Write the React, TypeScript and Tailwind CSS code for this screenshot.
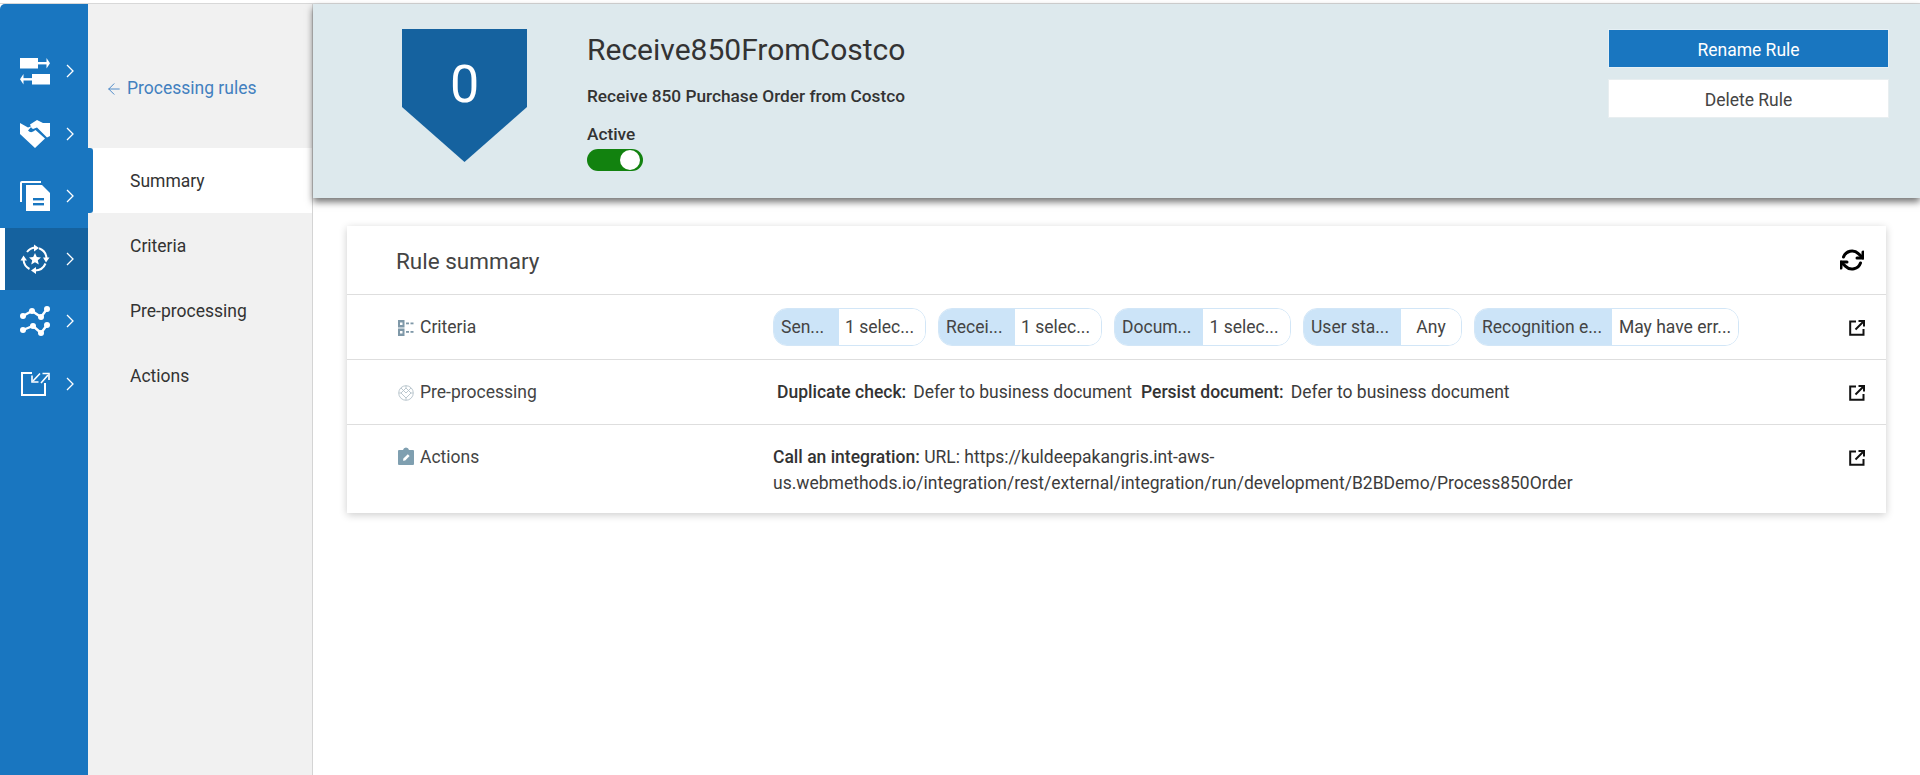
import { ArrowLeft } from "lucide-react";
import { FiRefreshCw } from "react-icons/fi";

const TransferIcon = () => (
  <svg width="30" height="30" viewBox="0 0 30 30" fill="#fff">
    <rect x="0" y="2" width="18" height="10.5" />
    <rect x="18" y="6" width="10" height="2.4" />
    <path d="M26.5 2 L30 7.2 L26.5 12.5Z" />
    <rect x="12" y="18" width="18" height="10.5" />
    <rect x="2" y="22.1" width="10" height="2.4" />
    <path d="M3.5 18 L0 23.3 L3.5 28.5Z" />
  </svg>
);

const HandshakeIcon = () => (
  <svg width="30" height="28" viewBox="0 0 30 28" fill="#fff">
    <path d="M0 3 L8 7.5 L12 6 L8 10.5 Q11 14 15.5 10 L25 18.5 L15 28 L0 14Z" />
    <path d="M10 4.5 L17 0 L23 3 L30 3 V16 L27 17.5 L17 7.5 L13 9 L11.5 8Z" />
  </svg>
);

const DocsIcon = () => (
  <svg width="30" height="30" viewBox="0 0 30 30">
    <path d="M21 1 H2 Q1 1 1 2 V21" fill="none" stroke="#fff" strokeWidth="2" />
    <path d="M6 4 H22 L30 12 V30 H6Z" fill="#fff" />
    <rect x="13" y="17" width="11" height="2.4" fill="#1976c0" />
    <rect x="13" y="22" width="11" height="2.4" fill="#1976c0" />
  </svg>
);

const RulesIcon = () => (
  <svg width="30" height="30" viewBox="0 0 30 30" fill="none" stroke="#fff" strokeWidth="2">
    <path d="M7 8 A11.5 11.5 0 0 1 15 3.5" />
    <path d="M19 4.3 A11.5 11.5 0 0 1 26.5 14" />
    <path d="M25.5 19.5 A11.5 11.5 0 0 1 15 26.5" />
    <path d="M9.5 25 A11.5 11.5 0 0 1 3.5 15.5" />
    <path d="M14 0.5 L19 4 L14 7.5Z M29.5 13.5 L26 18.5 L23 13.5Z M16 23 L11 26.5 L16 30Z M0.5 16.5 L3.5 11.5 L7 16.5Z" fill="#fff" stroke="none" />
    <path d="M15 9 L16.8 13 L21 13.4 L17.8 16.2 L18.8 20.4 L15 18.2 L11.2 20.4 L12.2 16.2 L9 13.4 L13.2 13 Z" fill="#fff" stroke="none" />
  </svg>
);

const TrendIcon = () => (
  <svg width="30" height="32" viewBox="0 0 30 32" fill="#fff" stroke="#fff" strokeWidth="2.4">
    <polyline points="3,11 12,6 21,12 27,4" fill="none" />
    <polyline points="3,25 13,21 21,28 27,20" fill="none" />
    {[[3, 11], [12, 6], [21, 12], [27, 4], [3, 25], [13, 21], [21, 28], [27, 20]].map(([cx, cy]) => (
      <circle key={`${cx}-${cy}`} cx={cx} cy={cy} r="3" stroke="none" />
    ))}
  </svg>
);

const ExportIcon = () => (
  <svg width="30" height="30" viewBox="0 0 30 30" fill="none" stroke="#fff">
    <path d="M12 4 H2 V26 H25 V14" strokeWidth="2" />
    <path d="M13 12 L20 4.5 M21 14 L28 6" strokeWidth="1.6" />
    <path d="M12 6.5 V13 H18.5 M22.5 4.5 H29 V11" strokeWidth="1.6" />
  </svg>
);

const CriteriaIcon = () => (
  <svg width="16" height="16" viewBox="0 0 16 16" fill="#7f98a8">
    <path fillRule="evenodd" d="M0 0 H6.5 V7.5 H0Z M2 2.5 V5 H4.5 V2.5Z" />
    <path fillRule="evenodd" d="M0 8.5 H6.5 V16 H0Z M2 11 V13.5 H4.5 V11Z" />
    <rect x="8" y="2.5" width="3" height="1.8" />
    <rect x="12.5" y="2.5" width="3" height="1.8" />
    <rect x="8" y="11" width="3" height="1.8" />
    <rect x="12.5" y="11" width="3" height="1.8" />
  </svg>
);

const PreProcessingIcon = () => (
  <svg width="16" height="16" viewBox="0 0 16 16" fill="none" stroke="#b4c2ca" strokeWidth="0.9">
    <circle cx="8" cy="8" r="7.3" />
    <path d="M8 3 L13 8 L8 13 L3 8Z M8 0.7 V3 M15 8 H13 M8 15 V13 M1 8 H3 M3 3 L8 8 M13 3 L8 8" />
  </svg>
);

const ActionsIcon = () => (
  <svg width="16" height="18" viewBox="0 0 16 18" className="-mt-[4px]">
    <path d="M1 3 H5 Q5.5 0.5 8 0.5 Q10.5 0.5 11 3 H15 Q16 3 16 4 V17 Q16 18 15 18 H1 Q0 18 0 17 V4 Q0 3 1 3Z" fill="#7f9fb0" />
    <path d="M5 13.8 L5.4 11.6 L9.8 7.2 L11.6 9 L7.2 13.4Z" fill="#fff" />
  </svg>
);

const railItems = [
  { icon: <TransferIcon /> },
  { icon: <HandshakeIcon /> },
  { icon: <DocsIcon /> },
  { icon: <RulesIcon />, active: true },
  { icon: <TrendIcon /> },
  { icon: <ExportIcon /> },
];

const chips = [
  { label: "Sen...", value: "1 selec...", labelW: "w-[65px]", valueW: "w-[86px] pr-[5px]" },
  { label: "Recei...", value: "1 selec...", labelW: "w-[76px]", valueW: "w-[86px] pr-[5px]" },
  { label: "Docum...", value: "1 selec...", labelW: "w-[88px]", valueW: "w-[87px] pr-[5px]" },
  { label: "User sta...", value: "Any", labelW: "w-[97px]", valueW: "w-[60px]" },
  { label: "Recognition e...", value: "May have err...", labelW: "w-[137px]", valueW: "w-[126px]" },
];

function SummaryRow({ icon, label, children, className }: { icon: React.ReactNode; label: string; children: React.ReactNode; className: string }) {
  return (
    <div className={`flex border-t border-[#dedede] pl-[51px] pr-[21px] ${className}`}>
      <div className="flex h-[33px] w-[375px] shrink-0 items-center gap-[6px] self-start text-[17.5px] text-[#444]">
        <span className="flex w-[16px] justify-center">{icon}</span>
        {label}
      </div>
      <div className="min-w-0 flex-1 text-[17.5px] text-[#3c3c3c]">{children}</div>
      <svg width="16" height="16" viewBox="0 0 16 16" fill="none" stroke="#111" strokeWidth="2" className="mt-[9px] shrink-0">
        <path d="M7 1.5 H1.2 V14.8 H14.5 V9" />
        <path d="M6.5 9.5 L14 2" />
        <path d="M9.5 1 H15 V6.5" />
      </svg>
    </div>
  );
}

export default function App() {
  return (
    <div className="flex h-[775px] flex-col overflow-hidden bg-white font-['Roboto',sans-serif]">
      <div className="mt-[3px] flex flex-1 border-t border-[#d8d8d8]">
        {/* Icon rail */}
        <div className="w-[88px] shrink-0 rounded-tl-[5px] bg-[#1976c0] pt-[36px]">
          {railItems.map((item, i) => (
            <div key={i} className={`flex h-[62.5px] items-center ${item.active ? "border-l-[5px] border-white bg-[#15629f] pl-[15px]" : "pl-[20px]"}`}>
              <span className="flex w-[30px] justify-center">{item.icon}</span>
              <svg width="8" height="14" viewBox="0 0 8 14" fill="none" stroke="#fff" strokeWidth="1.3" className="ml-[16px]">
                <polyline points="1,1 7,7 1,13" />
              </svg>
            </div>
          ))}
        </div>

        {/* Rule navigation */}
        <div className="flex w-[225px] shrink-0 flex-col border-r border-[#d4d4d4] bg-[#f1f1f1]">
          <div className="flex h-[144px] items-start pl-[17px] pt-[75px] text-[17.5px] text-[#4280bf]">
            <ArrowLeft size={18} strokeWidth={1.3} className="mt-[1px] text-[#4a88c7]" />
            <span className="ml-[4px] leading-[19px]">Processing rules</span>
          </div>
          <div className="flex h-[65px]">
            <div className="w-[5px] rounded-r-[3px] bg-[#1976c0]" />
            <div className="flex flex-1 items-center bg-white pl-[37px] pt-[1px] text-[17.5px] text-[#333]">Summary</div>
          </div>
          {["Criteria", "Pre-processing", "Actions"].map((name) => (
            <div key={name} className="flex h-[65px] items-center pl-[42px] pt-[1px] text-[17.5px] text-[#333]">
              {name}
            </div>
          ))}
        </div>

        <div className="min-w-0 flex-1">
          {/* Rule header */}
          <div className="flex h-[194px] bg-[#dde9ed] pl-[89px] pr-[31px] shadow-[0_4px_7px_rgba(0,0,0,0.55)]">
            <div className="mt-[25px] flex h-[133px] w-[125px] shrink-0 justify-center bg-[#15629f] pt-[26px] text-[52px] leading-[60px] text-white [clip-path:polygon(0_0,100%_0,100%_78px,50%_100%,0_78px)]">
              0
            </div>
            <div className="ml-[60px] flex-1 text-[#333]">
              <h1 className="mt-[28px] text-[30px] leading-[36px] font-normal">Receive850FromCostco</h1>
              <p className="mt-[18px] text-[17.25px] leading-[20px] font-medium">Receive 850 Purchase Order from Costco</p>
              <p className="mt-[18px] text-[17.25px] leading-[20px] font-medium">Active</p>
              <div className="mt-[5px] flex h-[22px] w-[56px] items-center justify-end rounded-full bg-[#12820f] pr-[3px]">
                <span className="h-[20px] w-[20px] rounded-full bg-white" />
              </div>
            </div>
            <div className="-ml-[1px] mt-[25px] flex w-[281px] flex-col gap-[11px]">
              <button className="h-[39px] border border-[#e6f0f5] bg-[#1976c0] pt-[4px] text-[17.5px] text-white">Rename Rule</button>
              <button className="h-[39px] border border-[#e8eef0] bg-white pt-[4px] text-[17.5px] text-[#444]">Delete Rule</button>
            </div>
          </div>

          {/* Summary card */}
          <div className="ml-[34px] mr-[34px] mt-[28px] bg-white shadow-[0_2px_8px_rgba(0,0,0,0.2)]">
            <div className="flex h-[68px] items-center justify-between pl-[49px] pr-[22px]">
              <h2 className="pt-[3px] text-[22.5px] font-normal text-[#444]">Rule summary</h2>
              <FiRefreshCw size={24} strokeWidth={3} className="text-black" />
            </div>
            <SummaryRow icon={<CriteriaIcon />} label="Criteria" className="h-[65px] pt-[16px]">
              <div className="-mt-[3px] flex gap-[12px]">
                {chips.map((c) => (
                  <div key={c.label} className="flex h-[38px] overflow-hidden rounded-[14px] border border-[#d2e6f7] text-[#444]">
                    <span className={`flex items-center whitespace-nowrap bg-[#cce4f8] pl-[7px] ${c.labelW}`}>{c.label}</span>
                    <span className={`flex items-center justify-center whitespace-nowrap bg-white ${c.valueW}`}>{c.value}</span>
                  </div>
                ))}
              </div>
            </SummaryRow>
            <SummaryRow icon={<PreProcessingIcon />} label="Pre-processing" className="h-[65px] pt-[16px]">
              <div className="ml-[4px] flex h-[33px] items-center whitespace-pre">
                <strong className="font-medium text-[#333]">Duplicate check:</strong>
                <span className="ml-[7px]">Defer to business document</span>
                <strong className="ml-[9px] font-medium text-[#333]">Persist document:</strong>
                <span className="ml-[7px]">Defer to business document</span>
              </div>
            </SummaryRow>
            <SummaryRow icon={<ActionsIcon />} label="Actions" className="h-[89px] pt-[16px]">
              <p className="mt-[3px] leading-[26px]">
                <strong className="font-medium text-[#333]">Call an integration:</strong> URL: https://kuldeepakangris.int-aws-
                <br />
                us.webmethods.io/integration/rest/external/integration/run/development/B2BDemo/Process850Order
              </p>
            </SummaryRow>
          </div>
        </div>
      </div>
    </div>
  );
}
